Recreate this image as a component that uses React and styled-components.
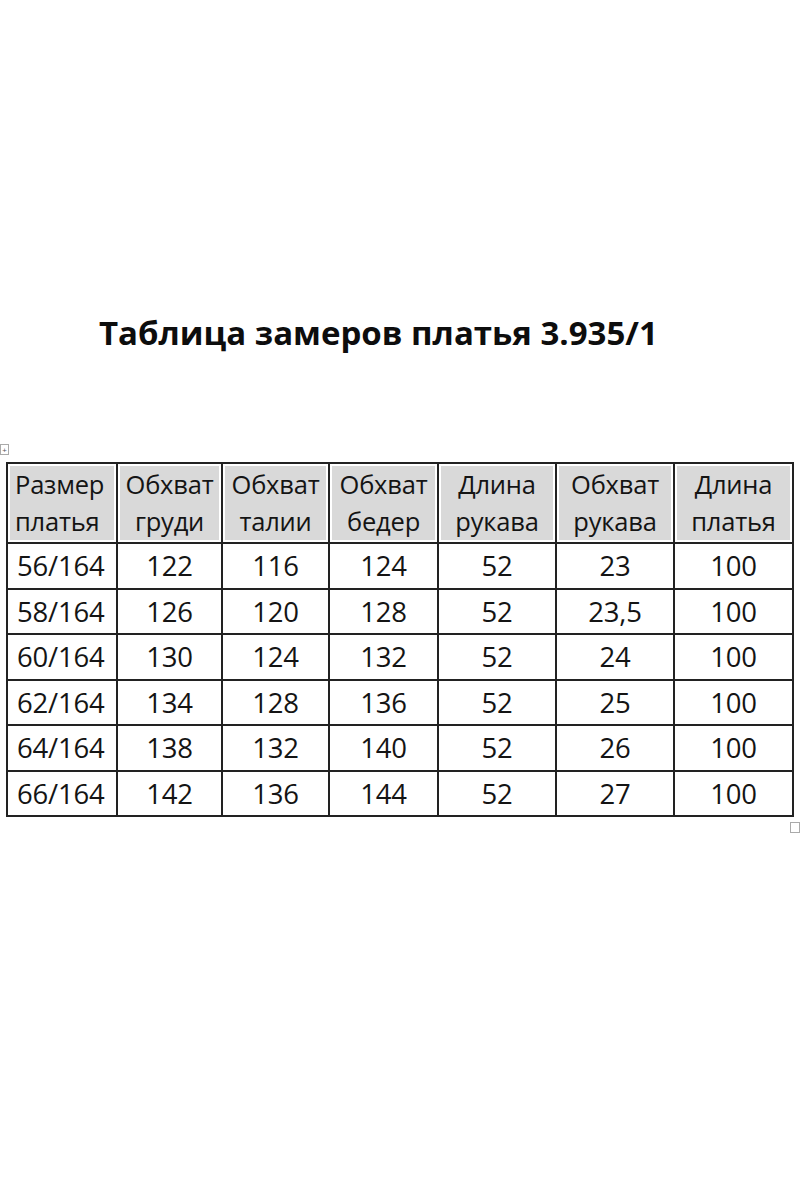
import React from 'react'
import styled, { createGlobalStyle } from 'styled-components'

const GlobalStyle = createGlobalStyle`
  html, body {
    margin: 0;
    padding: 0;
    background: #fff;
  }
  body {
    font-family: "Open Sans", "Liberation Sans", sans-serif;
    color: #111;
  }
`

const Page = styled.div`
  width: 800px;
  height: 1200px;
  box-sizing: border-box;
  padding-top: 308px;
`

const Title = styled.h1`
  margin: 0;
  padding-left: 99px;
  font-size: 33px;
  font-weight: 700;
  line-height: 50px;
  letter-spacing: 0;
  color: #0d0d0d;
`

const TableArea = styled.div`
  position: relative;
  margin: 104px 0 0 6px;
  width: 786px;
`

// table move handle, as in the word processor
const MoveHandle = styled.div`
  position: absolute;
  left: -6px;
  top: -18px;
  width: 7px;
  height: 9px;
  border: 1px solid #aaa;
  background: #fff;
  font-size: 8px;
  line-height: 9px;
  text-align: center;
  color: #555;
`

const ResizeHandle = styled.div`
  position: absolute;
  right: -8px;
  bottom: -16px;
  width: 8px;
  height: 9px;
  border: 1px solid #aaa;
  background: #fff;
`

const Table = styled.table`
  border-collapse: collapse;
  table-layout: fixed;
  width: 786px;
`

const HeadCell = styled.th`
  border: 2px solid #222;
  background: #d9d9d9;
  box-shadow: inset 0 0 0 2px #fff;
  font-size: 25.5px;
  letter-spacing: -0.2px;
  font-weight: 400;
  height: 78px;
  padding: 0;
  line-height: 37px;
  text-align: ${({ $left }) => ($left ? 'left' : 'center')};
  padding-left: ${({ $left }) => ($left ? '7px' : '0')};
  color: #141414;
`

const Cell = styled.td`
  border: 2px solid #222;
  height: 43.5px;
  padding: 0;
  font-size: 27.5px;
  letter-spacing: -0.2px;
  text-align: ${({ $left }) => ($left ? 'left' : 'center')};
  padding-left: ${({ $left }) => ($left ? '9px' : '0')};
  color: #141414;
`

const widths = [110, 105, 107, 109, 118, 118, 119]

const headers = [
  ['Размер', 'платья'],
  ['Обхват', 'груди'],
  ['Обхват', 'талии'],
  ['Обхват', 'бедер'],
  ['Длина', 'рукава'],
  ['Обхват', 'рукава'],
  ['Длина', 'платья'],
]

const rows = [
  ['56/164', '122', '116', '124', '52', '23', '100'],
  ['58/164', '126', '120', '128', '52', '23,5', '100'],
  ['60/164', '130', '124', '132', '52', '24', '100'],
  ['62/164', '134', '128', '136', '52', '25', '100'],
  ['64/164', '138', '132', '140', '52', '26', '100'],
  ['66/164', '142', '136', '144', '52', '27', '100'],
]

export default function App() {
  return (
    <>
      <GlobalStyle />
      <Page>
        <Title>Таблица замеров платья 3.935/1</Title>
        <TableArea>
          <MoveHandle>+</MoveHandle>
          <Table>
            <colgroup>
              {widths.map((w, i) => (
                <col key={i} style={{ width: w }} />
              ))}
            </colgroup>
            <thead>
              <tr>
                {headers.map(([a, b], i) => (
                  <HeadCell key={i} $left={i === 0}>
                    {a}
                    <br />
                    {b}
                  </HeadCell>
                ))}
              </tr>
            </thead>
            <tbody>
              {rows.map((r) => (
                <tr key={r[0]}>
                  {r.map((v, i) => (
                    <Cell key={i} $left={i === 0}>
                      {v}
                    </Cell>
                  ))}
                </tr>
              ))}
            </tbody>
          </Table>
          <ResizeHandle />
        </TableArea>
      </Page>
    </>
  )
}
